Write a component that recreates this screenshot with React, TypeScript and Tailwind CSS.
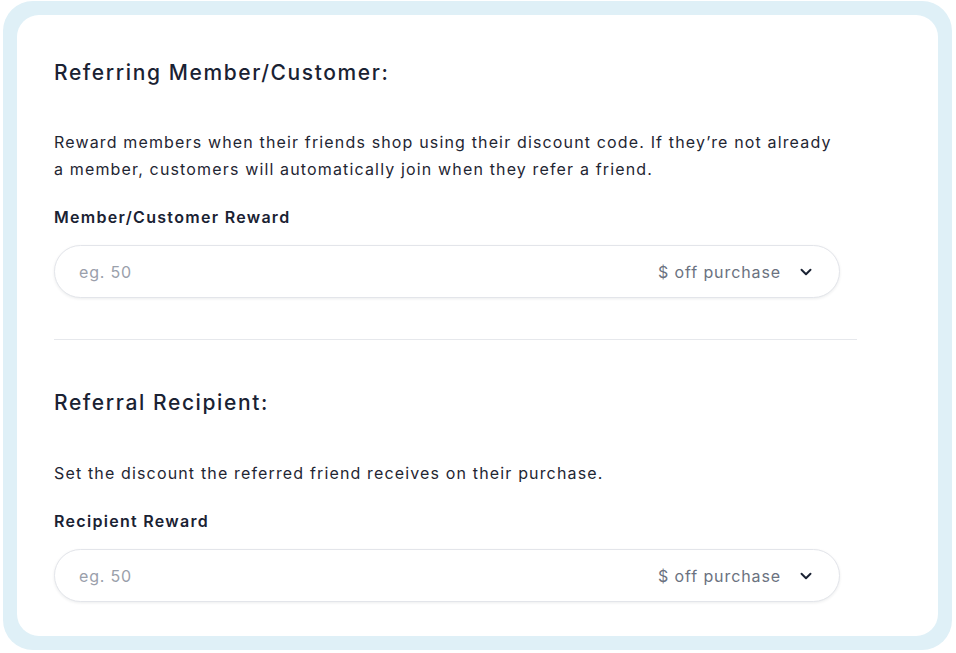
import { ChevronDown } from "lucide-react";

function RewardInput() {
  return (
    <div className="flex h-[53px] w-[786px] items-center rounded-full border border-[#e3e5ea] bg-white pl-6 pr-6 shadow-[0_1px_3px_rgba(16,24,40,0.08)]">
      <input
        type="text"
        placeholder="eg. 50"
        className="flex-1 bg-transparent text-[16px] tracking-[0.8px] text-[#1a2233] outline-none placeholder:text-[#9aa0ab]"
      />
      <span className="text-[16px] tracking-[0.9px] text-[#6b7280]">$ off purchase</span>
      <ChevronDown className="ml-4 h-[18px] w-[18px] text-[#1a2233]" strokeWidth={2.6} />
    </div>
  );
}

export default function App() {
  return (
    <div
      className="ml-[3px] mt-[1px] h-[649px] w-[949px] rounded-[30px] bg-[#dff0f7] p-[14px]"
      style={{ fontFamily: 'Inter, "Liberation Sans", Arial, sans-serif' }}
    >
      <div className="h-full rounded-[22px] bg-white pl-[37px] pr-[81px] pt-[44px] text-[#1a2233]">
        <h2 className="text-[21px] leading-[28px] font-medium tracking-[1.6px]">
          Referring Member/Customer:
        </h2>
        <p className="mt-[42px] text-[16px] leading-[27px] tracking-[1.15px] text-[#1f2633]">
          Reward members when their friends shop using their discount code. If they’re not already
          <br />
          a member, customers will automatically join when they refer a friend.
        </p>
        <div className="mt-[22px] text-[16px] leading-[24px] font-semibold tracking-[1.3px]">
          Member/Customer Reward
        </div>
        <div className="mt-[16px]">
          <RewardInput />
        </div>

        <div className="mt-[41px] h-px bg-[#e6e8ec]" />

        <h2 className="mt-[49px] text-[21px] leading-[28px] font-medium tracking-[1.6px]">
          Referral Recipient:
        </h2>
        <p className="mt-[43px] text-[16px] leading-[27px] tracking-[1.15px] text-[#1f2633]">
          Set the discount the referred friend receives on their purchase.
        </p>
        <div className="mt-[22px] text-[16px] leading-[24px] font-semibold tracking-[1.3px]">
          Recipient Reward
        </div>
        <div className="mt-[16px]">
          <RewardInput />
        </div>
      </div>
    </div>
  );
}
